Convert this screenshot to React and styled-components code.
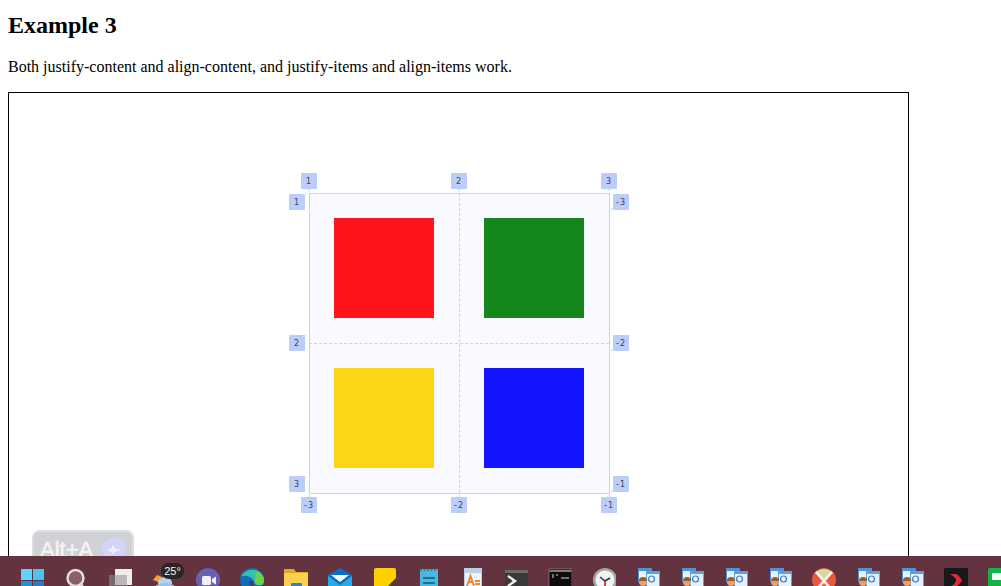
import React from "react";
import styled, { createGlobalStyle } from "styled-components";

const Global = createGlobalStyle`
  html, body { margin: 0; padding: 0; background: #fff; overflow: hidden; height: 100%; }
  body { margin: 8px; font-family: "Liberation Serif", "Times New Roman", serif; font-size: 16px; color: #000; }
`;

const Title = styled.h2`
  font-size: 24px; font-weight: 700; margin: 0 0 18.92px; line-height: 27px; padding-top: 4px;
`;
const Lead = styled.p`
  margin: 0 0 16px; line-height: 18px;
`;
const Frame = styled.div`
  width: 899px; border: 1px solid #000; display: flex; justify-content: center; padding: 100px 0;
`;
const Grid = styled.div`
  position: relative; width: 300px; height: 300px; background: #f9faff; left: 0.5px;
  display: grid; grid-template: 150px 150px / 150px 150px; justify-items: center; align-items: center;
  &::after {
    content: ""; position: absolute; left: 0; top: 0; width: 301px; height: 301px; box-sizing: border-box; border: 1px solid #c6d3f4;
  }
`;
const Cell = styled.div`
  width: 100px; height: 100px; background: ${p => p.$c};
`;
const VLine = styled.div`
  position: absolute; left: 150px; top: 0; bottom: 0; border-left: 1px dashed #c6d3f4;
`;
const HLine = styled.div`
  position: absolute; top: 150px; left: 0; right: 0; border-top: 1px dashed #c6d3f4;
`;
const tips = {
  top: "left: 5.5px; top: 16px; border-width: 3px 2.5px 0; border-color: #dde6fd transparent transparent;",
  bottom: "left: 5.5px; top: -3px; border-width: 0 2.5px 3px; border-color: transparent transparent #dde6fd;",
  left: "left: 14px; top: -1px; border-width: 0 0 3px 3px; border-color: transparent transparent #dde6fd transparent;",
  right: "left: -2px; top: 14px; border-width: 3px 3px 0 0; border-color: #dde6fd transparent transparent transparent;",
};
const Badge = styled.div`
  position: absolute; left: ${p => p.$x}px; top: ${p => p.$y}px; width: 16px; height: 16px; background: #bccdfa; border-radius: 1px;
  font: 8px/17px "DejaVu Sans", sans-serif; color: #3a4256; text-align: center; letter-spacing: 1px; z-index: 1;
  &::before { content: ""; position: absolute; width: 0; height: 0; border-style: solid; ${p => tips[p.$tip]} }
`;
const Hint = styled.div`
  position: fixed; left: 32px; top: 530px; width: 102px; height: 40px; box-sizing: border-box; background: #d1d2d6; border: 2px solid #dcdde0; border-radius: 8px;
  display: flex; align-items: flex-start; gap: 9px; padding: 4px 0 0 6px;
  font: 400 22px/27px "Liberation Sans", Arial, sans-serif; color: #f4f4f6; -webkit-text-stroke: 0.5px #f4f4f6;
`;
const HintDot = styled.div`
  width: 24px; height: 24px; border-radius: 50%; background: #d3d4fb; display: flex; align-items: center; justify-content: center; margin-top: 2px;
`;
const Taskbar = styled.div`
  position: fixed; left: 0; right: 0; bottom: 0; height: 30px; background: #633340; display: flex; gap: 20px; padding: 12px 0 0 20px; box-sizing: border-box; overflow: hidden;
`;
const Slot = styled.div`
  position: relative; flex: 0 0 24px; width: 24px; height: 24px;
`;
const Temp = styled.div`
  position: absolute; left: 9px; top: -5px; width: 23px; height: 16px; border-radius: 8px; background: #262626; color: #f2f2f2;
  font: 11px/16px "Liberation Sans", Arial, sans-serif; text-align: center;
`;
const Glyph = styled.svg`
  display: block; width: 24px; height: 24px;
`;

const Win = () => (
  <Glyph viewBox="0 0 24 24">
    <rect x="1" y="1" width="11" height="11" fill="#5fd3f9" />
    <rect x="13" y="1" width="11" height="11" fill="#4cc4f3" />
    <rect x="1" y="13" width="11" height="11" fill="#1e90d8" />
    <rect x="13" y="13" width="11" height="11" fill="#1b80c8" />
  </Glyph>
);
const Search = () => (
  <Glyph viewBox="0 0 24 24">
    <circle cx="11.5" cy="10" r="8" fill="#8a5f6a" stroke="#e4e0e0" strokeWidth="2.4" />
    <path d="M17 16l4 6" stroke="#e4e0e0" strokeWidth="2.4" />
  </Glyph>
);
const TaskView = () => (
  <Glyph viewBox="0 0 24 24">
    <rect x="7" y="1" width="17" height="16" fill="#ededed" />
    <rect x="1" y="7" width="18" height="16" fill="#77696d" />
    <rect x="7" y="7" width="12" height="10" fill="#bcb8b8" />
  </Glyph>
);
const Weather = () => (
  <Glyph viewBox="0 0 24 24">
    <path d="M1 12l4-5 5 2-1 6z" fill="#f4a234" />
    <ellipse cx="13" cy="15" rx="7" ry="6" fill="#b8d0f2" />
    <ellipse cx="13" cy="21" rx="11" ry="6" fill="#9dbdea" />
  </Glyph>
);
const Meet = () => (
  <Glyph viewBox="0 0 24 24">
    <circle cx="12" cy="12" r="12" fill="#6a5fb5" />
    <rect x="6" y="8" width="9" height="9" rx="1.5" fill="#f1effa" />
    <path d="M16 11l4-2.5v8L16 14z" fill="#f1effa" />
  </Glyph>
);
const Edge = () => (
  <Glyph viewBox="0 0 24 24">
    <circle cx="12" cy="12" r="12" fill="#0f6fb8" />
    <path d="M1 9C3 1 20-3 24 11c0 3-1 5-3 6-4 1-7 0-7-4C12 9 5 6 1 9z" fill="#35c1a8" />
    <path d="M16 3c5 1 8 5 8 9 0 3-1 5-3 5-3 0-5-1-6-3z" fill="#67d34e" />
    <path d="M9 13c0 4 3 7 6 7 3 0 4-1 4-1-6 0-6-3-5-6z" fill="#633340" />
  </Glyph>
);
const Folder = () => (
  <Glyph viewBox="0 0 24 24">
    <path d="M0 1h10l2 3h12v20H0z" fill="#e5a91e" />
    <rect x="0" y="5" width="24" height="19" fill="#fbd04f" />
    <rect x="7" y="15" width="11" height="9" rx="1" fill="#1a8ad4" />
  </Glyph>
);
const Mail = () => (
  <Glyph viewBox="0 0 24 24">
    <path d="M0 7L12 0l12 7v17H0z" fill="#0a6fc2" />
    <path d="M0 8l12 9 12-9v16H0z" fill="#29a9ea" />
    <path d="M3 7h18l-9 7z" fill="#f4fafe" />
  </Glyph>
);
const Sticky = () => (
  <Glyph viewBox="0 0 24 24">
    <path d="M2 2a2 2 0 012-2h18a2 2 0 012 2v22H2z" fill="#fdd000" />
    <path d="M14 24v-4l10-10v14z" fill="#4a4030" />
  </Glyph>
);
const Notes = () => (
  <Glyph viewBox="0 0 24 24">
    <rect x="4" y="1" width="18" height="23" fill="#4bb8e0" />
    <path d="M4 2h18" stroke="#2a86b0" strokeWidth="2" strokeDasharray="2 1.5" />
    <path d="M7 10h12M7 15h12M7 20h12" stroke="#1d6f96" strokeWidth="2.2" />
  </Glyph>
);
const Doc = () => (
  <Glyph viewBox="0 0 24 24">
    <rect x="4" y="0" width="18" height="24" fill="#b9cfe8" />
    <rect x="5" y="5" width="16" height="19" fill="#eef4fb" />
    <path d="M7 18l3.5-10L14 18M8.5 14h4M15 13h5M15 16h5" stroke="#ef8a2a" strokeWidth="2" fill="none" />
  </Glyph>
);
const Term = () => (
  <Glyph viewBox="0 0 24 24">
    <rect x="1" y="2" width="23" height="22" fill="#3a3a3a" />
    <rect x="1" y="2" width="23" height="3" fill="#6b6b6b" />
    <path d="M4 8l7 5-7 5" stroke="#f2f2f2" strokeWidth="2.4" fill="none" />
    <rect x="12" y="18" width="8" height="3" fill="#f2f2f2" />
  </Glyph>
);
const Cmd = () => (
  <Glyph viewBox="0 0 24 24">
    <rect x="1" y="1" width="23" height="23" fill="#0c0c0c" stroke="#9a9a9a" strokeWidth=".6" />
    <rect x="1.5" y="2" width="22" height="2" fill="#7d7d7d" />
    <path d="M4 7h2M4 9h2M8 7h2M13 10h8" stroke="#d8d8d8" strokeWidth="1.2" />
  </Glyph>
);
const Clock = () => (
  <Glyph viewBox="0 0 24 24">
    <circle cx="13" cy="12" r="12" fill="#a7a7a7" />
    <circle cx="13" cy="12" r="9.5" fill="#f3f3f3" />
    <path d="M13 13L8 9" stroke="#333" strokeWidth="1.6" />
    <path d="M13 13l5-3" stroke="#333" strokeWidth="1.6" />
    <path d="M13 13v9" stroke="#d52f1f" strokeWidth="1.8" />
  </Glyph>
);
const People = () => (
  <Glyph viewBox="0 0 24 24">
    <rect x="2" y="0" width="14" height="14" fill="#4d92d8" />
    <rect x="3" y="3" width="12" height="10" fill="#e8f2fb" />
    <rect x="10" y="3" width="14" height="21" fill="#5aa3e2" />
    <rect x="11" y="6" width="12" height="17" fill="#e6f1fb" />
    <circle cx="15.5" cy="11" r="3" fill="none" stroke="#3b7cc2" strokeWidth="1.2" />
    <circle cx="7" cy="14" r="4" fill="#e3a274" />
    <path d="M3 13a4 4 0 018 0z" fill="#9a5a2a" />
    <path d="M1 25c0-6 3-7 6-7s6 1 6 7z" fill="#5fa347" />
  </Glyph>
);
const XMark = () => (
  <Glyph viewBox="0 0 24 24">
    <circle cx="12" cy="12" r="12" fill="#e8573f" />
    <path d="M3 5a12 12 0 0118 0l-9 7z" fill="#d6dda2" />
    <path d="M4 4l16 18M20 4L4 22" stroke="#f7f0e8" strokeWidth="2.6" />
  </Glyph>
);
const Dark = () => (
  <Glyph viewBox="0 0 24 24">
    <rect width="24" height="24" fill="#17181c" />
    <path d="M6 6h6c4 2 5 5 6 6-1 3-4 6-7 7H6c3-2 6-4 6-7 0-2-3-4-6-6z" fill="#e32a33" />
  </Glyph>
);
const Green = () => (
  <Glyph viewBox="0 0 24 24">
    <rect width="24" height="24" rx="2" fill="#12b347" />
    <rect x="4" y="5" width="20" height="7" fill="#f2fbf4" />
  </Glyph>
);

const colours = ["#ff141c", "#14861c", "#fad619", "#1414ff"];
const badges = [
  [-8, -20, "1", "top"], [142, -20, "2", "top"], [292, -20, "3", "top"],
  [-20, 1, "1", "left"], [-20, 142, "2", "left"], [-20, 283, "3", "left"],
  [304, 1, "-3", "right"], [304, 142, "-2", "right"], [304, 283, "-1", "right"],
  [-8, 304, "-3", "bottom"], [142, 304, "-2", "bottom"], [292, 304, "-1", "bottom"],
];
const icons = [Win, Search, TaskView, Weather, Meet, Edge, Folder, Mail, Sticky, Notes, Doc, Term, Cmd, Clock, People, People, People, People, XMark, People, People, Dark, Green];

export default function App() {
  return (
    <>
      <Global />
      <Title>Example 3</Title>
      <Lead>Both justify-content and align-content, and justify-items and align-items work.</Lead>
      <Frame>
        <Grid>
          {colours.map(c => <Cell key={c} $c={c} />)}
          <VLine />
          <HLine />
          {badges.map(([x, y, t, tip], i) => <Badge key={i} $x={x} $y={y} $tip={tip}>{t}</Badge>)}
        </Grid>
      </Frame>
      <Hint>
        Alt+A
        <HintDot>
          <svg width="14" height="10" viewBox="0 0 14 10">
            <path d="M1 5h2M4 3v4M6 1v8M8 3v4M10 4v2M12 5h1" stroke="#fff" strokeWidth="1.2" />
          </svg>
        </HintDot>
      </Hint>
      <Taskbar>
        {icons.map((Icon, i) => (
          <Slot key={i}>
            <Icon />
            {Icon === Weather && <Temp>25°</Temp>}
          </Slot>
        ))}
      </Taskbar>
    </>
  );
}
